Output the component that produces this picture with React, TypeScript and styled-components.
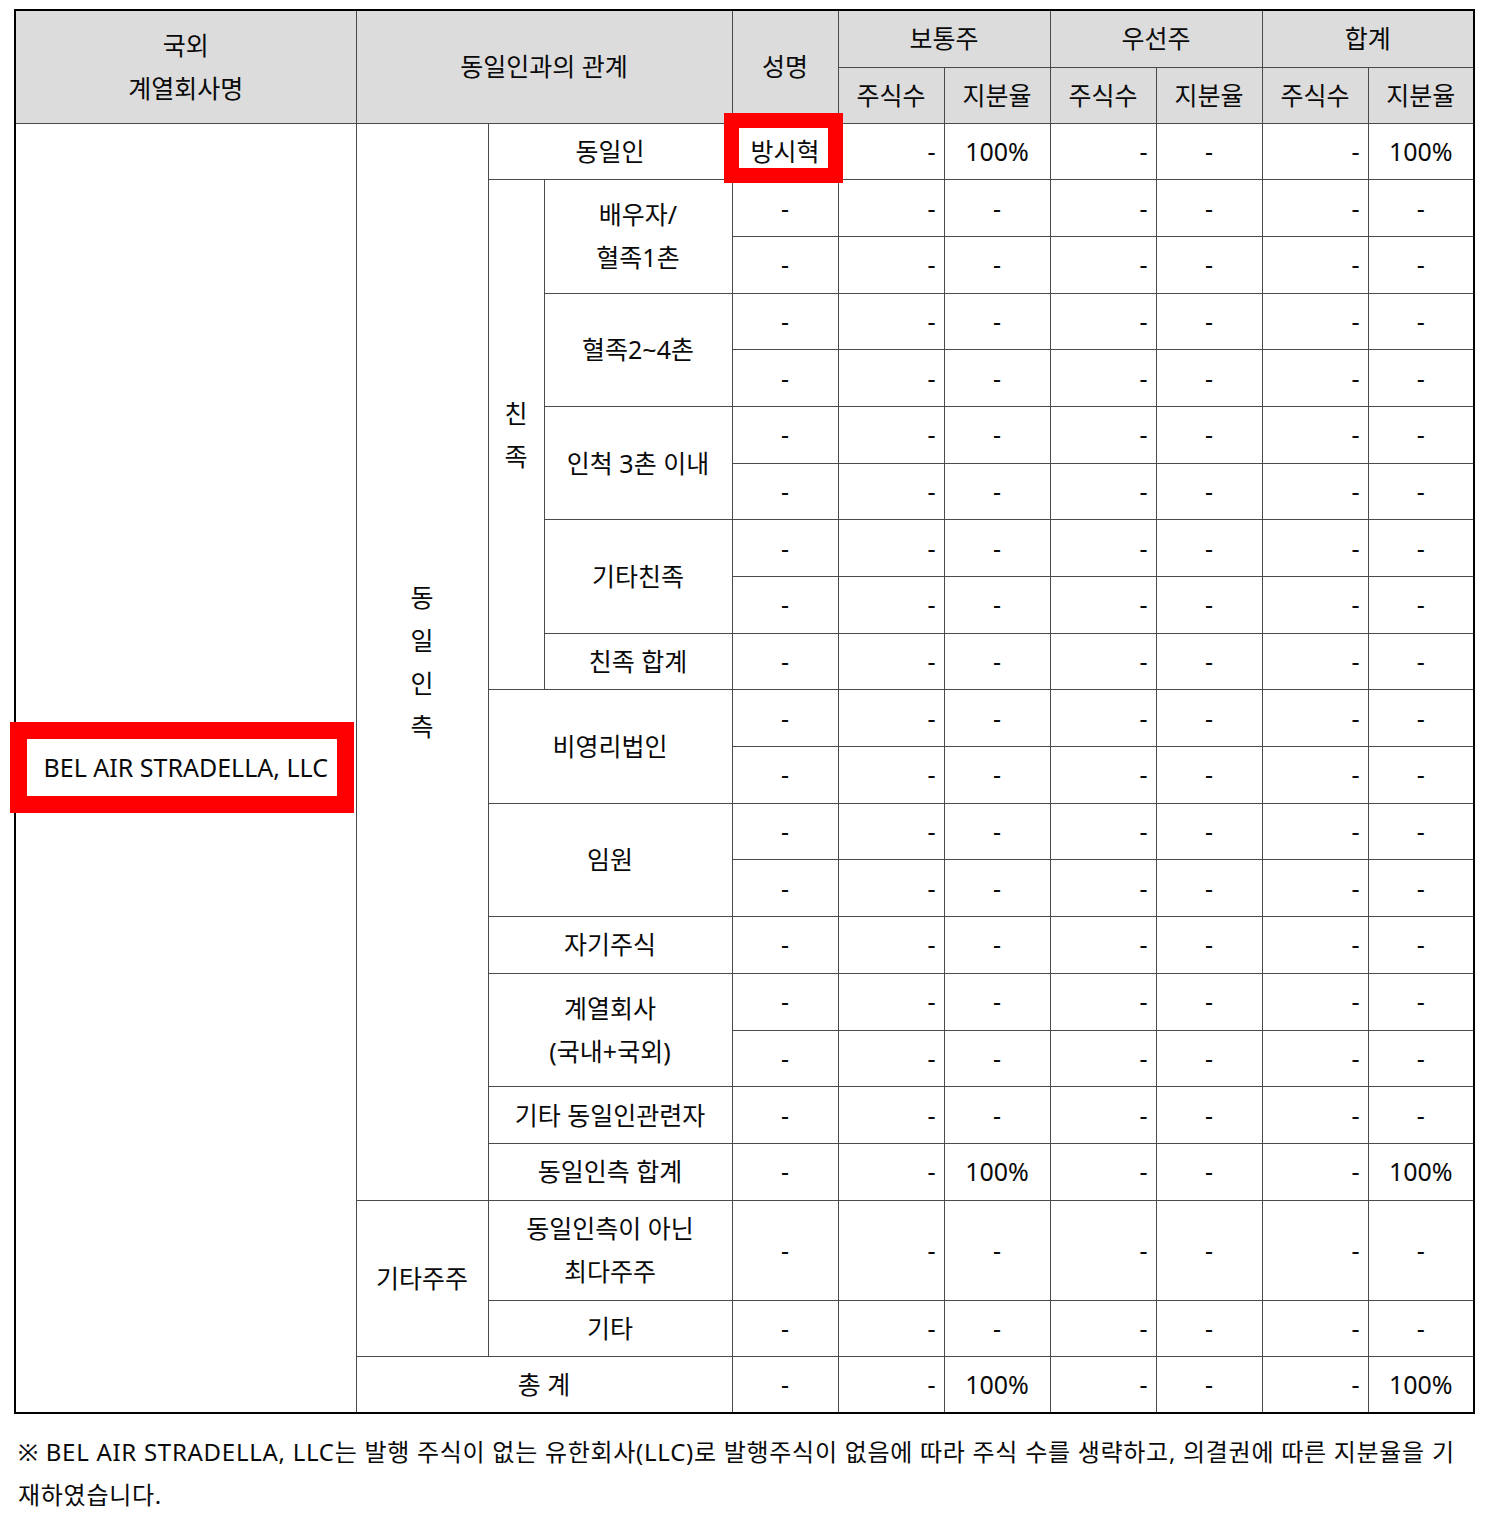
import React from "react";
import styled, { createGlobalStyle } from "styled-components";

const Global = createGlobalStyle`
  html, body { margin: 0; padding: 0; background: #fff; }
  body { font-family: "Noto Sans", "Noto Sans CJK KR", sans-serif; color: #0a0a0a; }
`;

const Page = styled.div`
  position: relative;
  padding: 9px 0 0 14px;
  width: 1460px;
`;

const Table = styled.table`
  border-collapse: collapse;
  table-layout: fixed;
  width: 1459px;
  border: 2px solid #000;
  font-size: 25px;
  line-height: 43px;
`;

const Row = styled.tr<{ $h?: number }>`
  height: ${(p) => (p.$h ? `${p.$h}px` : "56.7px")};
`;

const Th = styled.th`
  background: #dcdcdc;
  border: 1px solid #4a4a4a;
  font-weight: 400;
  padding: 0;
  text-align: center;
  vertical-align: middle;
`;

const Td = styled.td<{ $align?: "left" | "center" | "right" }>`
  border: 1px solid #4a4a4a;
  padding: 0 ${(p) => (p.$align === "right" ? "8px" : "2px")} 0 2px;
  text-align: ${(p) => p.$align || "center"};
  vertical-align: middle;
  white-space: nowrap;
`;

const Vertical = styled.span`
  display: inline-block;
  line-height: 43px;
`;

const Note = styled.p`
  margin: 16px 0 0 4px;
  width: 1452px;
  font-size: 24px;
  line-height: 43px;
  word-break: break-all;
  letter-spacing: 0.72px;
`;

const Highlight = styled.div<{ $w: number }>`
  position: absolute;
  border: ${(p) => p.$w}px solid #ff0000;
  box-sizing: border-box;
  pointer-events: none;
`;

const WithLine = ({ lines }: { lines: string[] }) => (
  <>
    {lines.map((l, i) => (
      <React.Fragment key={i}>
        {i > 0 && <br />}
        {l}
      </React.Fragment>
    ))}
  </>
);

type Vals = string[];
const D: Vals = ["-", "-", "-", "-", "-", "-", "-"];
const HUNDRED: Vals = ["-", "-", "100%", "-", "-", "-", "100%"];
const NAME_ROW: Vals = ["방시혁", "-", "100%", "-", "-", "-", "100%"];

const ValueCells = ({ v }: { v: Vals }) => (
  <>
    {v.map((x, i) => (
      <Td key={i} $align={i === 1 || i === 3 || i === 5 ? "right" : "center"}>
        {x}
      </Td>
    ))}
  </>
);

export default function App() {
  return (
    <Page>
      <Global />
      <Table>
        <colgroup>
          <col style={{ width: 341 }} />
          <col style={{ width: 132 }} />
          <col style={{ width: 56 }} />
          <col style={{ width: 188 }} />
          <col style={{ width: 106 }} />
          <col style={{ width: 106 }} />
          <col style={{ width: 106 }} />
          <col style={{ width: 106 }} />
          <col style={{ width: 106 }} />
          <col style={{ width: 106 }} />
          <col style={{ width: 106 }} />
        </colgroup>
        <thead>
          <Row $h={57}>
            <Th rowSpan={2}>
              <WithLine lines={["국외", "계열회사명"]} />
            </Th>
            <Th rowSpan={2} colSpan={3}>
              동일인과의 관계
            </Th>
            <Th rowSpan={2}>성명</Th>
            <Th colSpan={2}>보통주</Th>
            <Th colSpan={2}>우선주</Th>
            <Th colSpan={2}>합계</Th>
          </Row>
          <Row $h={56}>
            <Th>주식수</Th>
            <Th>지분율</Th>
            <Th>주식수</Th>
            <Th>지분율</Th>
            <Th>주식수</Th>
            <Th>지분율</Th>
          </Row>
        </thead>
        <tbody>
          <Row>
            <Td rowSpan={22}>BEL AIR STRADELLA, LLC</Td>
            <Td rowSpan={19}>
              <Vertical>
                <WithLine lines={["동", "일", "인", "측"]} />
              </Vertical>
            </Td>
            <Td colSpan={2}>동일인</Td>
            <ValueCells v={NAME_ROW} />
          </Row>
          <Row>
            <Td rowSpan={9}>
              <Vertical>
                <WithLine lines={["친", "족"]} />
              </Vertical>
            </Td>
            <Td rowSpan={2}>
              <WithLine lines={["배우자/", "혈족1촌"]} />
            </Td>
            <ValueCells v={D} />
          </Row>
          <Row>
            <ValueCells v={D} />
          </Row>
          <Row>
            <Td rowSpan={2}>혈족2~4촌</Td>
            <ValueCells v={D} />
          </Row>
          <Row>
            <ValueCells v={D} />
          </Row>
          <Row>
            <Td rowSpan={2}>인척 3촌 이내</Td>
            <ValueCells v={D} />
          </Row>
          <Row>
            <ValueCells v={D} />
          </Row>
          <Row>
            <Td rowSpan={2}>기타친족</Td>
            <ValueCells v={D} />
          </Row>
          <Row>
            <ValueCells v={D} />
          </Row>
          <Row>
            <Td>친족 합계</Td>
            <ValueCells v={D} />
          </Row>
          <Row>
            <Td rowSpan={2} colSpan={2}>
              비영리법인
            </Td>
            <ValueCells v={D} />
          </Row>
          <Row>
            <ValueCells v={D} />
          </Row>
          <Row>
            <Td rowSpan={2} colSpan={2}>
              임원
            </Td>
            <ValueCells v={D} />
          </Row>
          <Row>
            <ValueCells v={D} />
          </Row>
          <Row>
            <Td colSpan={2}>자기주식</Td>
            <ValueCells v={D} />
          </Row>
          <Row>
            <Td rowSpan={2} colSpan={2}>
              <WithLine lines={["계열회사", "(국내+국외)"]} />
            </Td>
            <ValueCells v={D} />
          </Row>
          <Row>
            <ValueCells v={D} />
          </Row>
          <Row>
            <Td colSpan={2}>기타 동일인관련자</Td>
            <ValueCells v={D} />
          </Row>
          <Row>
            <Td colSpan={2}>동일인측 합계</Td>
            <ValueCells v={HUNDRED} />
          </Row>
          <Row $h={100}>
            <Td rowSpan={2}>기타주주</Td>
            <Td colSpan={2}>
              <WithLine lines={["동일인측이 아닌", "최다주주"]} />
            </Td>
            <ValueCells v={D} />
          </Row>
          <Row>
            <Td colSpan={2}>기타</Td>
            <ValueCells v={D} />
          </Row>
          <Row>
            <Td colSpan={3}>총 계</Td>
            <ValueCells v={HUNDRED} />
          </Row>
        </tbody>
      </Table>
      <Note>
        ※ BEL AIR STRADELLA, LLC는 발행 주식이 없는 유한회사(LLC)로 발행주식이 없음에 따라 주식 수를 생략하고, 의결권에 따른 지분율을 기재하였습니다.
      </Note>
      <Highlight $w={15} style={{ left: 724, top: 113, width: 119, height: 70 }} />
      <Highlight $w={17} style={{ left: 10, top: 722, width: 344, height: 91 }} />
    </Page>
  );
}
